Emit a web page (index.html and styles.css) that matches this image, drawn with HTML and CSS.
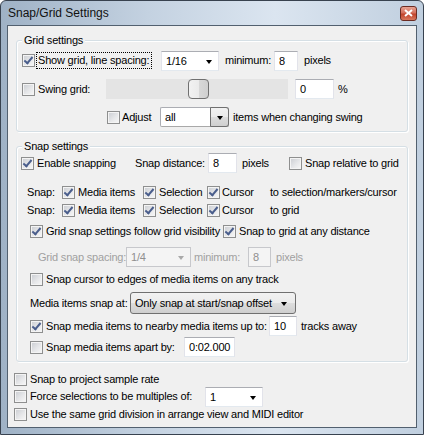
FILE: index.html
```html
<!DOCTYPE html>
<html lang="en">
<head>
  <meta charset="UTF-8" />
  <title>Snap/Grid Settings</title>
  <link rel="stylesheet" href="styles.css">
</head>
<body>
  <div class="window">
    <div class="titlebar">
      <span class="title">Snap/Grid Settings</span>
      <span class="close">
        <svg width="9" height="8" viewBox="0 0 9 8"><path d="M1 1 L8 7 M8 1 L1 7" stroke="#fff" stroke-width="2" /></svg>
      </span>
    </div>

    <div class="client">
      <!-- grid -->
      <div class="group g-grid">
        <span class="legend">Grid settings</span>
        <div class="row h21 pt9">
          <span class="cb on ml5"></span>
          <span class="lbl focus ml2 w114">Show grid, line spacing:</span>
          <span class="combo ml10 w58">1/16</span>
          <span class="lbl ml6 w46">minimum:</span>
          <span class="tb ml3 w24">8</span>
          <span class="lbl ml6">pixels</span>
        </div>
        <div class="row h20 mt8">
          <span class="cb ml5"></span>
          <span class="lbl ml3 w60">Swing grid:</span>
          <span class="slider ml8"><span class="thumb"></span></span>
          <span class="tb ml7 w39">0</span>
          <span class="lbl ml4">%</span>
        </div>
        <div class="row h20 mt8">
          <span class="cb ml90"></span>
          <span class="lbl ml2 w30">Adjust</span>
          <span class="combo btn ml8 w69">all</span>
          <span class="lbl ml4">items when changing swing</span>
        </div>
      </div>

      <!-- snap -->
      <div class="group g-snap">
        <span class="legend">Snap settings</span>
        <div class="row h20 pt6">
          <span class="cb on ml4"></span>
          <span class="lbl ml3 w94">Enable snapping</span>
          <span class="lbl ml4 w73">Snap distance:</span>
          <span class="tb w29">8</span>
          <span class="lbl ml5 w30">pixels</span>
          <span class="cb ml17"></span>
          <span class="lbl ml3">Snap relative to grid</span>
        </div>
        <div class="row h18 mt10">
          <span class="lbl ml10 w32">Snap:</span>
          <span class="cb on ml3"></span>
          <span class="lbl ml3 w57">Media items</span>
          <span class="cb on ml8"></span>
          <span class="lbl ml3 w47">Selection</span>
          <span class="cb on ml1"></span>
          <span class="lbl ml2 w45">Cursor</span>
          <span class="lbl ml3">to selection/markers/cursor</span>
        </div>
        <div class="row h18">
          <span class="lbl ml10 w32">Snap:</span>
          <span class="cb on ml3"></span>
          <span class="lbl ml3 w57">Media items</span>
          <span class="cb on ml8"></span>
          <span class="lbl ml3 w47">Selection</span>
          <span class="cb on ml1"></span>
          <span class="lbl ml2 w45">Cursor</span>
          <span class="lbl ml3">to grid</span>
        </div>
        <div class="row h16 mt4">
          <span class="cb on ml13"></span>
          <span class="lbl ml3 w174">Grid snap settings follow grid visibility</span>
          <span class="cb on ml3"></span>
          <span class="lbl ml3">Snap to grid at any distance</span>
        </div>
        <div class="row h20 mt8 off">
          <span class="lbl ml21 w87">Grid snap spacing:</span>
          <span class="combo ml1 w65">1/4</span>
          <span class="lbl ml3 w54">minimum:</span>
          <span class="tb w23">8</span>
          <span class="lbl ml5">pixels</span>
        </div>
        <div class="row h16 mt4">
          <span class="cb ml13"></span>
          <span class="lbl ml3">Snap cursor to edges of media items on any track</span>
        </div>
        <div class="row h22 mt5">
          <span class="lbl ml13 w100">Media items snap at:</span>
          <span class="dropbtn w166">Only snap at start/snap offset</span>
        </div>
        <div class="row h20 mt2">
          <span class="cb on ml13"></span>
          <span class="lbl ml3 w223">Snap media items to nearby media items up to:</span>
          <span class="tb w28">10</span>
          <span class="lbl ml4">tracks away</span>
        </div>
        <div class="row h20 mt1">
          <span class="cb ml13"></span>
          <span class="lbl ml3 w138">Snap media items apart by:</span>
          <span class="tb w51">0:02.000</span>
        </div>
      </div>

      <!-- misc -->
      <div class="row h14 mt10">
        <span class="cb ml6"></span>
        <span class="lbl ml3">Snap to project sample rate</span>
      </div>
      <div class="row h21">
        <span class="cb ml6"></span>
        <span class="lbl ml3 w175">Force selections to be multiples of:</span>
        <span class="combo w58">1</span>
      </div>
      <div class="row h14">
        <span class="cb ml6"></span>
        <span class="lbl ml3">Use the same grid division in arrange view and MIDI editor</span>
      </div>
    </div>
  </div>
</body>
</html>
```

FILE: styles.css
```css
* {
  box-sizing: border-box;
}
body {
  margin: 0;
  font-family: "Liberation Sans", Arial, sans-serif;
  font-size: 11px;
  letter-spacing: -0.2px;
  color: #000;
  background: #fff;
}

/* window frame */
.window {
  width: 424px;
  height: 435px;
  padding: 0 6px 6px 6px;
  border: 1px solid #38424f;
  border-radius: 6px 6px 0 0;
  background: linear-gradient(to right, #9fb2c6 0%, #c4d2e1 35%, #dbe5f0 65%, #c0cfdf 100%);
}
.titlebar {
  height: 24px;
  display: flex;
  align-items: center;
  padding-left: 1px;
}
.title {
  font-size: 12px;
  letter-spacing: 0;
  color: #111;
}
.close {
  margin-left: auto;
  margin-right: 0;
  width: 17px;
  height: 15px;
  border: 1px solid #6b2b22;
  border-radius: 3px;
  background: linear-gradient(#e8a393 0%, #d46f5b 45%, #c2432b 55%, #d8785d 100%);
  display: flex;
  align-items: center;
  justify-content: center;
}
.client {
  height: 403px;
  border: 1px solid #52606f;
  background: #f0f0f0;
}

/* group boxes */
.group {
  position: relative;
  width: 392px;
  margin-left: 8px;
  border: 1px solid #d5dfe5;
  border-radius: 3px;
  box-shadow: inset 1px 1px 0 #fff, 1px 1px 0 #fff;
}
.g-grid {
  margin-top: 14px;
  padding-bottom: 4px;
}
.g-snap {
  margin-top: 14px;
  padding-bottom: 4px;
}
.legend {
  position: absolute;
  top: -7px;
  left: 5px;
  padding: 0 2px;
  line-height: 13px;
  background: #f0f0f0;
}

/* rows */
.row {
  display: flex;
  align-items: center;
  white-space: nowrap;
}
.h14 { height: 14px; }
.h16 { height: 16px; }
.h18 { height: 18px; }
.h20 { height: 20px; }
.h21 { height: 21px; }
.h22 { height: 22px; }
.pt6 { margin-top: 6px; }
.pt9 { margin-top: 9px; }
.mt1 { margin-top: 1px; }
.mt2 { margin-top: 2px; }
.mt4 { margin-top: 4px; }
.mt5 { margin-top: 5px; }
.mt8 { margin-top: 8px; }
.mt10 { margin-top: 10px; }

.ml1 { margin-left: 1px; }
.ml2 { margin-left: 2px; }
.ml3 { margin-left: 3px; }
.ml4 { margin-left: 4px; }
.ml5 { margin-left: 5px; }
.ml6 { margin-left: 6px; }
.ml7 { margin-left: 7px; }
.ml8 { margin-left: 8px; }
.ml10 { margin-left: 10px; }
.ml13 { margin-left: 13px; }
.ml17 { margin-left: 17px; }
.ml21 { margin-left: 21px; }
.ml90 { margin-left: 90px; }

.w23 { width: 23px; }
.w24 { width: 24px; }
.w28 { width: 28px; }
.w29 { width: 29px; }
.w30 { width: 30px; }
.w32 { width: 32px; }
.w39 { width: 39px; }
.w45 { width: 45px; }
.w46 { width: 46px; }
.w47 { width: 47px; }
.w51 { width: 51px; }
.w54 { width: 54px; }
.w57 { width: 57px; }
.w58 { width: 58px; }
.w60 { width: 60px; }
.w65 { width: 65px; }
.w69 { width: 69px; }
.w73 { width: 73px; }
.w87 { width: 87px; }
.w94 { width: 94px; }
.w100 { width: 100px; }
.w114 { width: 114px; }
.w138 { width: 138px; }
.w166 { width: 166px; }
.w174 { width: 174px; }
.w175 { width: 175px; }
.w223 { width: 223px; }

.lbl {
  flex: none;
  line-height: 13px;
}
.focus {
  outline: 1px dotted #000;
  outline-offset: 0;
  padding: 1px 1px;
  line-height: 13px;
}

/* checkbox */
.cb {
  flex: none;
  position: relative;
  width: 13px;
  height: 13px;
  border: 1px solid #8e8f8f;
  background: linear-gradient(135deg, #c9ccd1 0%, #e6e7e9 55%, #f8f8f8 100%);
  box-shadow: inset 0 0 0 1px #f4f4f4;
}
.cb.on::after {
  content: "";
  position: absolute;
  left: 3px;
  top: 0px;
  width: 3px;
  height: 7px;
  border: solid #4a5e8c;
  border-width: 0 2px 2px 0;
  transform: rotate(40deg);
}

/* text box */
.tb {
  flex: none;
  height: 20px;
  padding-left: 4px;
  line-height: 18px;
  background: #fff;
  border: 1px solid;
  border-color: #abadb3 #e2e3ea #e3e9ef #e2e3ea;
}

/* combo with edit field */
.combo {
  flex: none;
  position: relative;
  height: 20px;
  padding-left: 4px;
  line-height: 18px;
  background: #fff;
  border: 1px solid;
  border-color: #abadb3 #e2e3ea #e3e9ef #e2e3ea;
}
.combo::after {
  content: "";
  position: absolute;
  right: 6px;
  top: 8px;
  border-style: solid;
  border-width: 4px 3.5px 0 3.5px;
  border-color: #000 transparent transparent transparent;
}
.combo.btn {
  border-color: #abadb3 #a9a9a9 #a9a9a9 #abadb3;
  border-radius: 2px;
}
.combo.btn::before {
  content: "";
  position: absolute;
  right: -1px;
  top: -1px;
  bottom: -1px;
  width: 17px;
  border: 1px solid #707070;
  border-radius: 0 3px 3px 0;
  background: linear-gradient(#f2f2f2 0%, #ebebeb 50%, #dddddd 51%, #cfcfcf 100%);
}
.combo.btn::after {
  right: 5px;
}

/* drop-down list as a button */
.dropbtn {
  flex: none;
  position: relative;
  height: 22px;
  padding-left: 4px;
  line-height: 20px;
  border: 1px solid #707070;
  border-radius: 3px;
  background: linear-gradient(#f2f2f2 0%, #ebebeb 50%, #dddddd 51%, #cfcfcf 100%);
}
.dropbtn::after {
  content: "";
  position: absolute;
  right: 8px;
  top: 9px;
  border-style: solid;
  border-width: 4px 3.5px 0 3.5px;
  border-color: #000 transparent transparent transparent;
}

/* swing slider */
.slider {
  flex: none;
  position: relative;
  width: 182px;
  height: 20px;
  background: #e4e4e4;
}
.thumb {
  position: absolute;
  left: 82px;
  top: 0;
  width: 21px;
  height: 20px;
  border: 1px solid #707070;
  border-radius: 4px;
  background: linear-gradient(to right, #f2f2f2 0%, #ebebeb 50%, #d8d8d8 51%, #cfcfcf 100%);
}

/* disabled row */
.off .lbl {
  color: #a0a0a0;
}
.off .tb,
.off .combo {
  color: #8f8f8f;
  background: #f4f4f4;
  border-color: #c7c8cc;
}
.off .combo::after {
  border-top-color: #a9a9a9;
}
```
